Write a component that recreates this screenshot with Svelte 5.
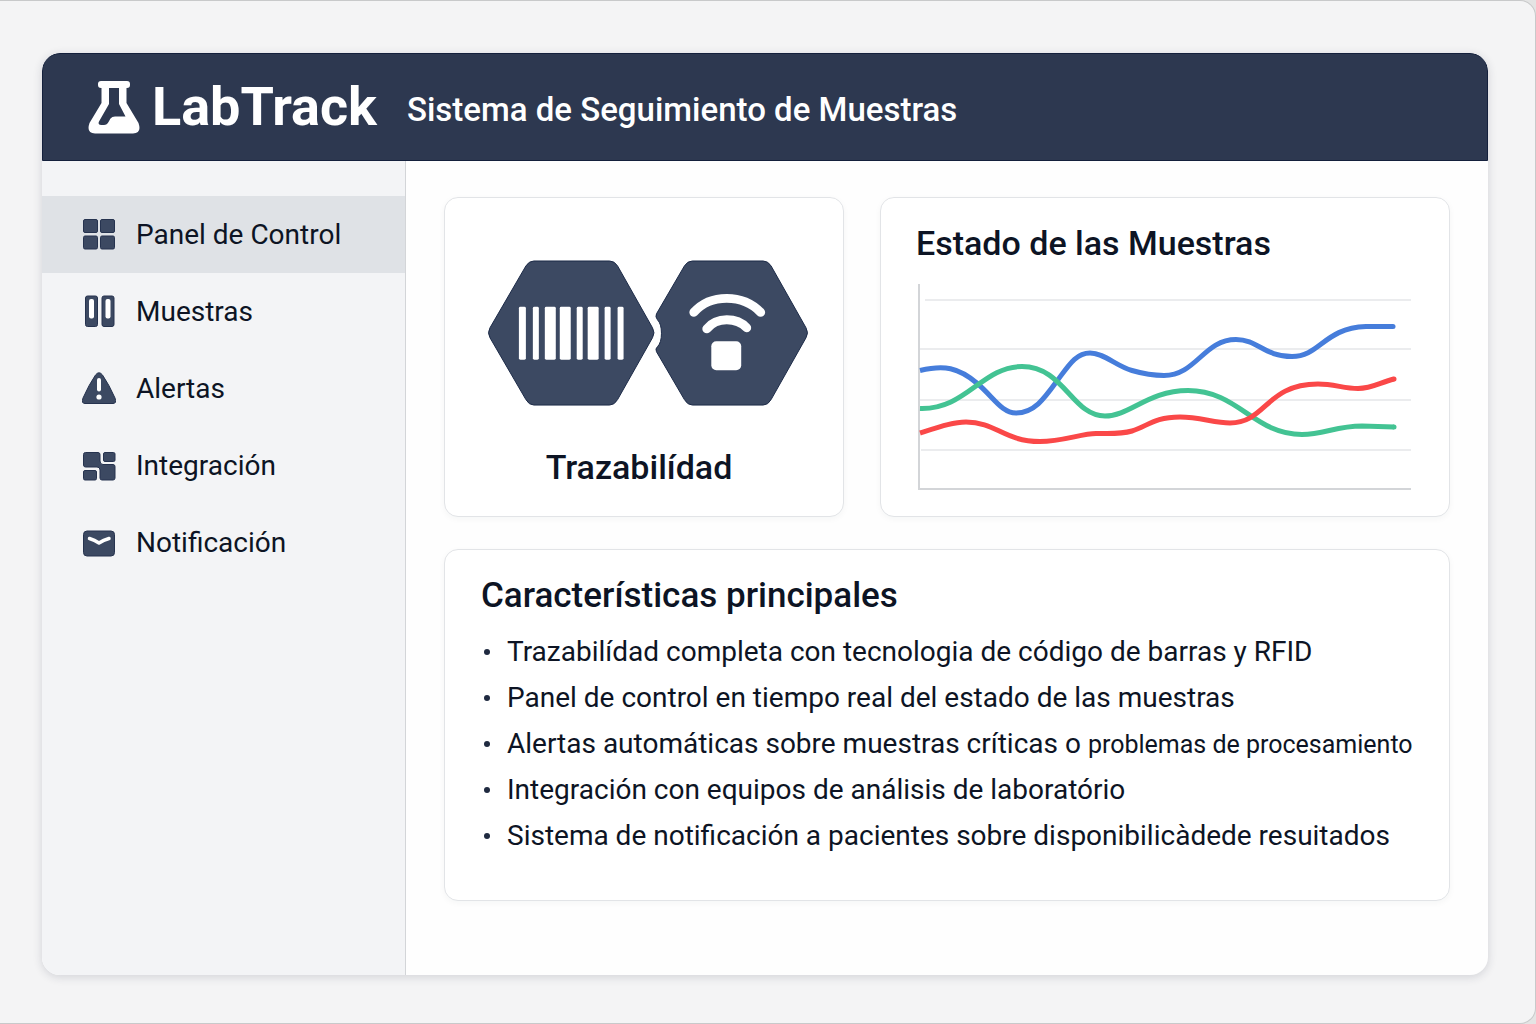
<script>
  const nav = [
    { id: 'panel', label: 'Panel de Control' },
    { id: 'muestras', label: 'Muestras' },
    { id: 'alertas', label: 'Alertas' },
    { id: 'integracion', label: 'Integración' },
    { id: 'notificacion', label: 'Notificación' }
  ];

  const features = [
    { text: 'Trazabilídad completa con tecnologia de código de barras y RFID' },
    { text: 'Panel de control en tiempo real del estado de las muestras' },
    { text: 'Alertas automáticas sobre muestras críticas o ', small: 'problemas de procesamiento' },
    { text: 'Integración con equipos de análisis de laboratório' },
    { text: 'Sistema de notificación a pacientes sobre disponibilicàdede resuitados' }
  ];

  const gridLines = [
    { x: 9, y: 20 },
    { x: 4, y: 69 },
    { x: 4, y: 120 },
    { x: 5, y: 170 }
  ];

  const bars = [
    { x: 32, w: 7 },
    { x: 46, w: 6 },
    { x: 58, w: 11 },
    { x: 73, w: 11 },
    { x: 90, w: 6 },
    { x: 101, w: 11 },
    { x: 118, w: 6 },
    { x: 131, w: 6 }
  ];

  let active = $state('panel');
</script>

<div class="page">
  <div class="shell">
    <header class="topbar">
      <div class="brand">
        <svg class="flask" viewBox="0 0 52 54" aria-hidden="true">
          <path
            fill="#fff"
            fill-rule="evenodd"
            d="M13 1H39Q42 1 42 4V5Q42 8 39 8H38.500V23L50.500 43Q54 53.500 45 53.500H7Q-2 53.500 1.500 43L13.500 23V8H13Q10 8 10 5V4Q10 1 13 1zM21 8V24L11 41.500Q9.500 45 13 45H16Q19 45 20.500 42L22.500 38.500Q24 36.500 27 36.500H37.500L31 24V8z"
          />
        </svg>
        <h1>LabTrack</h1>
      </div>
      <p class="tagline">Sistema de Seguimiento de Muestras</p>
    </header>

    <div class="body">
      <nav class="sidebar" aria-label="Principal">
        {#each nav as item (item.id)}
          <button
            type="button"
            class="nav-item"
            class:active={active === item.id}
            aria-current={active === item.id ? 'page' : undefined}
            onclick={() => (active = item.id)}
          >
            <svg class="nav-icon" viewBox="0 0 34 34" aria-hidden="true">
              {#if item.id === 'panel'}
                <g class="ink">
                  <rect x="1.500" y="1.500" width="14" height="13" rx="1.500" />
                  <rect x="18.500" y="1.500" width="14" height="13" rx="1.500" />
                  <rect x="1.500" y="18" width="14" height="13" rx="1.500" />
                  <rect x="18.500" y="18" width="14" height="13" rx="1.500" />
                </g>
              {:else if item.id === 'muestras'}
                <g class="ink">
                  <rect x="3.500" y="1" width="12" height="30.500" rx="2" />
                  <rect x="20" y="1" width="12" height="30.500" rx="2" />
                </g>
                <rect x="7" y="4" width="5" height="19.500" rx="2" fill="#fff" />
                <rect x="23.500" y="4" width="5" height="19.500" rx="2" fill="#fff" />
              {:else if item.id === 'alertas'}
                <path
                  class="ink"
                  d="M13.500 3Q17-1.500 20.500 3Q27 12.500 33 26Q35 31.500 31 31.500H3Q-1 31.500 1 26Q7 12.500 13.500 3z"
                />
                <path d="M17 8v9.500" stroke="#fff" stroke-width="4" stroke-linecap="round" />
                <circle cx="17" cy="25" r="2.600" fill="#fff" />
              {:else if item.id === 'integracion'}
                <g class="ink">
                  <path
                    d="M3.500 3.500H16Q18 3.500 18 5.500V12Q18 15.500 21 15.500H31Q33 15.500 33 17.500V29Q33 31 31 31H20Q18 31 18 29V21Q18 18 15 18H3.500Q1.500 18 1.500 16V5.500Q1.500 3.500 3.500 3.500z"
                  />
                  <rect x="21.500" y="3.500" width="11.500" height="9" rx="1.500" />
                  <rect x="1.500" y="21.500" width="13" height="9.500" rx="1.500" />
                </g>
              {:else}
                <rect class="ink" x="1.500" y="5" width="31" height="25" rx="3.500" />
                <path
                  d="M7.500 12.500Q12.500 14 17 17Q21.500 14 27 12.500"
                  fill="none"
                  stroke="#fff"
                  stroke-width="3.500"
                  stroke-linecap="round"
                  stroke-linejoin="round"
                />
              {/if}
            </svg>
            <span>{item.label}</span>
          </button>
        {/each}
      </nav>

      <main class="content">
        <section class="card trace">
          <svg class="hexes" viewBox="0 0 323 146" aria-hidden="true">
            <g fill="#3c4962" stroke="#1c2a47" stroke-width="1">
              <path
                d="M47 1H123Q128 1 131 6L166 68Q169 73 166 78L131 140Q128 145.500 123 145.500H47Q42 145.500 39 140L3 78Q0 73 3 68L39 6Q42 1 47 1z"
              />
              <path
                d="M206 1H277Q282 1 285 6L320 68Q323 73 320 78L285 140Q282 145.500 277 145.500H206Q201 145.500 198 140L170 92Q168.500 89 171 87Q175 83 175 73.500Q175 64 171 60Q168.500 57 170 54L198 6Q201 1 206 1z"
              />
            </g>
            <g fill="#fff">
              {#each bars as bar}
                <rect x={bar.x} y="47" width={bar.w} height="53" rx="1.500" />
              {/each}
              <rect x="225" y="81.500" width="30" height="29" rx="5" />
            </g>
            <g fill="none" stroke="#fff" stroke-width="9" stroke-linecap="round">
              <path d="M207.500 52.500Q220 38.500 240.500 38.500T274.500 52.500" />
              <path d="M220.500 69Q228 60 240.500 60T260.500 68" />
            </g>
          </svg>
          <h2>Trazabilídad</h2>
        </section>

        <section class="card status">
          <h2>Estado de las Muestras</h2>
          <svg class="chart" viewBox="0 0 496 212" role="img" aria-label="Estado de las muestras">
            {#each gridLines as line}
              <path d="M{line.x} {line.y}H495" stroke="#e4e6e9" stroke-width="1.500" />
            {/each}
            <path d="M3 4V209H495" fill="none" stroke="#d3d5d8" stroke-width="2" />
            <g fill="none" stroke-width="5">
              <path
                stroke="#467ddb"
                d="M4 90.500C28 85 42 87 62 104C78 118 86 133 100 133C118 133 128 119 141 101C153 85 160 73 174 73C188 73 200 86 216 90.500C228 94 240 95.500 248 95.500C280 95.500 288 59.500 320 59.500C342 59.500 348 76.500 376 76.500C404 76.500 408 48 450 46.500H477"
              />
              <path
                stroke="#43c393"
                d="M4 128.500C50 130 66 86.500 106 86.500C148 86.500 156 136 189 136C214 136 232 110.500 272 110.500C322 110.500 338 154.500 386 154.500C408 154.500 420 146 446 146L478 147"
              />
              <path
                stroke="#fa4848"
                d="M4 153C26 146 38 142 50 142C80 142 88 161.500 124 161.500C146 161.500 166 153.500 180 153.500C194 153.500 204 154.500 216 151C232 146 238 137 264 137C284 137 298 143 314 143C350 143 350 104 402 104C418 104 428 108.500 442 108.500C456 108.500 464 102.500 478 99"
              />
            </g>
            <circle cx="477" cy="46.500" r="2.500" fill="#467ddb" />
            <circle cx="478" cy="147" r="2.500" fill="#43c393" />
            <circle cx="478" cy="99" r="2.500" fill="#fa4848" />
          </svg>
        </section>

        <section class="card features">
          <h2>Características principales</h2>
          <ul>
            {#each features as feature}
              <li>
                <span>{feature.text}{#if feature.small}<small>{feature.small}</small>{/if}</span>
              </li>
            {/each}
          </ul>
        </section>
      </main>
    </div>
  </div>
</div>

<style>
  :global(body) {
    margin: 0;
    background: #e4e4e4;
  }

  .page {
    box-sizing: border-box;
    min-height: 100vh;
    padding: 52px 47px 48px 42px;
    display: flex;
    border: 1px solid #c8c9ca;
    border-left: 0;
    border-radius: 0 16px 16px 0;
    background: #f4f4f5;
    color: #0d1424;
    font-family: Roboto, 'Liberation Sans', sans-serif;
  }

  .shell {
    flex: 1;
    display: flex;
    flex-direction: column;
    overflow: hidden;
    border-radius: 18px;
    background: #fefefe;
    box-shadow: 0 2px 10px rgb(30 40 60 / 16%);
  }

  .topbar {
    box-sizing: border-box;
    min-height: 108px;
    padding: 0 45px;
    display: flex;
    align-items: center;
    gap: 30px;
    border: 1px solid #14203c;
    border-radius: 18px 18px 0 0;
    background: #2d3850;
    color: #fff;
  }

  .brand {
    display: flex;
    align-items: center;
    gap: 12px;
  }

  .flask {
    width: 52px;
    height: 54px;
  }

  h1,
  h2,
  p,
  ul {
    margin: 0;
  }

  h1 {
    font-size: 54px;
    line-height: 64px;
    font-weight: 700;
  }

  .tagline {
    padding-top: 6px;
    font-size: 33px;
    line-height: 40px;
    font-weight: 500;
  }

  .body {
    flex: 1;
    display: grid;
    grid-template-columns: 364px 1fr;
  }

  .sidebar {
    padding-top: 35px;
    display: flex;
    flex-direction: column;
    border-right: 1px solid #d3d5d8;
    background: #f3f4f6;
  }

  .nav-item {
    height: 77px;
    padding: 0 40px;
    display: flex;
    align-items: center;
    gap: 20px;
    border: 0;
    background: transparent;
    color: inherit;
    font: inherit;
    font-size: 28px;
    line-height: 36px;
    text-align: left;
    cursor: pointer;
  }

  .nav-item.active {
    background: #dfe2e6;
  }

  .nav-icon {
    flex: none;
    width: 34px;
    height: 34px;
  }

  .ink {
    fill: #3c4962;
    stroke: #26334f;
    stroke-width: 1px;
  }

  .content {
    padding: 36px 38px;
    display: grid;
    grid-template-columns: 400fr 570fr;
    grid-template-rows: auto auto;
    align-content: start;
    gap: 32px 36px;
  }

  .card {
    box-sizing: border-box;
    border: 1px solid #e2e4e7;
    border-radius: 14px;
    background: #fff;
    box-shadow: 0 2px 6px rgb(30 40 60 / 4%);
  }

  h2 {
    font-size: 34px;
    line-height: 44px;
    font-weight: 500;
  }

  .trace {
    padding: 62px 34px 27px 42px;
    display: flex;
    flex-direction: column;
    align-items: center;
    justify-content: space-between;
  }

  .trace h2 {
    padding-right: 18px;
  }

  .hexes {
    width: 100%;
    max-width: 323px;
  }

  .status {
    padding: 23px 37px 24px 35px;
    display: flex;
    flex-direction: column;
    gap: 15px;
  }

  .chart {
    width: 100%;
  }

  .features {
    grid-column: 1 / -1;
    padding: 24px 30px 41px 36px;
  }

  .features h2 {
    font-size: 35px;
  }

  .features ul {
    padding: 11px 0 0;
    list-style: none;
  }

  .features li {
    display: flex;
    align-items: center;
    gap: 17px;
    padding-left: 3px;
    font-size: 28px;
    line-height: 46px;
  }

  .features li::before {
    content: '';
    flex: none;
    width: 6px;
    height: 6px;
    border-radius: 50%;
    background: #1f2a40;
  }

  .features small {
    font-size: 25px;
    line-height: 40px;
  }
</style>
